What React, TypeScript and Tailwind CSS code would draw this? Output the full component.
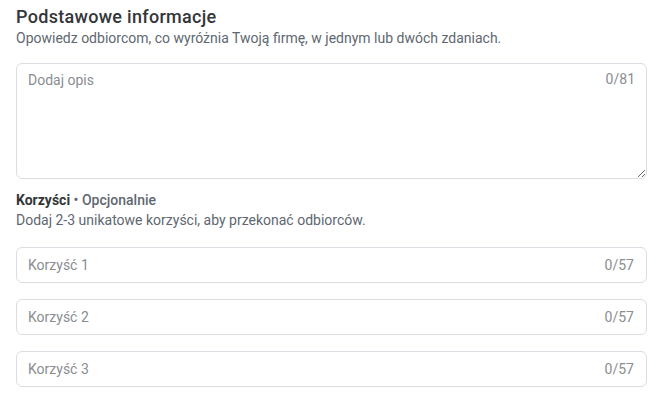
import { useState } from 'react';

const BENEFITS = ['Korzyść 1', 'Korzyść 2', 'Korzyść 3'];

function CountedInput({ placeholder, max }: { placeholder: string; max: number }) {
  const [value, setValue] = useState('');
  return (
    <div className="flex items-center h-[36px] w-full rounded-[6px] border border-[#dadde1] bg-white pl-[11px] pr-[12px]">
      <input
        type="text"
        value={value}
        maxLength={max}
        placeholder={placeholder}
        onChange={(e) => setValue(e.target.value)}
        className="flex-1 min-w-0 text-[14px] text-[#1c1e21] placeholder-[#8a8d91] outline-none bg-transparent"
      />
      <span className="text-[14px] text-[#8a8d91] ml-2">
        {value.length}/{max}
      </span>
    </div>
  );
}

export default function App() {
  const [desc, setDesc] = useState('');

  return (
    <div
      className="bg-white w-[669px] h-[408px] pl-[16px] pt-[5px]"
      style={{ fontFamily: 'Roboto, "Noto Sans", sans-serif' }}
    >
      <div className="w-[631px]">
        {/* Basic info */}
        <h2 className="text-[18px] leading-[24px] font-medium tracking-[0.3px] text-[#333639]">
          Podstawowe informacje
        </h2>
        <p className="text-[14px] leading-[18px] text-[#606770]">
          Opowiedz odbiorcom, co wyróżnia Twoją firmę, w jednym lub dwóch zdaniach.
        </p>

        <div className="relative mt-[16px]">
          <textarea
            value={desc}
            maxLength={81}
            placeholder="Dodaj opis"
            onChange={(e) => setDesc(e.target.value)}
            className="block w-full h-[116px] rounded-[6px] border border-[#dadde1] pl-[11px] pr-[60px] pt-[7px] text-[14px] leading-[18px] text-[#1c1e21] placeholder-[#8a8d91] outline-none"
          />
          <span className="absolute right-[12px] top-[7px] text-[14px] leading-[18px] text-[#8a8d91]">
            {desc.length}/81
          </span>
        </div>

        {/* Benefits */}
        <div className="mt-[12px] text-[14px] leading-[18px] font-medium">
          <span className="font-bold text-[#333639]">Korzyści</span>
          <span className="text-[#606770]"> • Opcjonalnie</span>
        </div>
        <p className="text-[14px] leading-[18px] text-[#606770] mt-[2px]">
          Dodaj 2-3 unikatowe korzyści, aby przekonać odbiorców.
        </p>

        <div className="flex flex-col gap-[16px] mt-[18px]">
          {BENEFITS.map((b) => (
            <CountedInput key={b} placeholder={b} max={57} />
          ))}
        </div>
      </div>
    </div>
  );
}
